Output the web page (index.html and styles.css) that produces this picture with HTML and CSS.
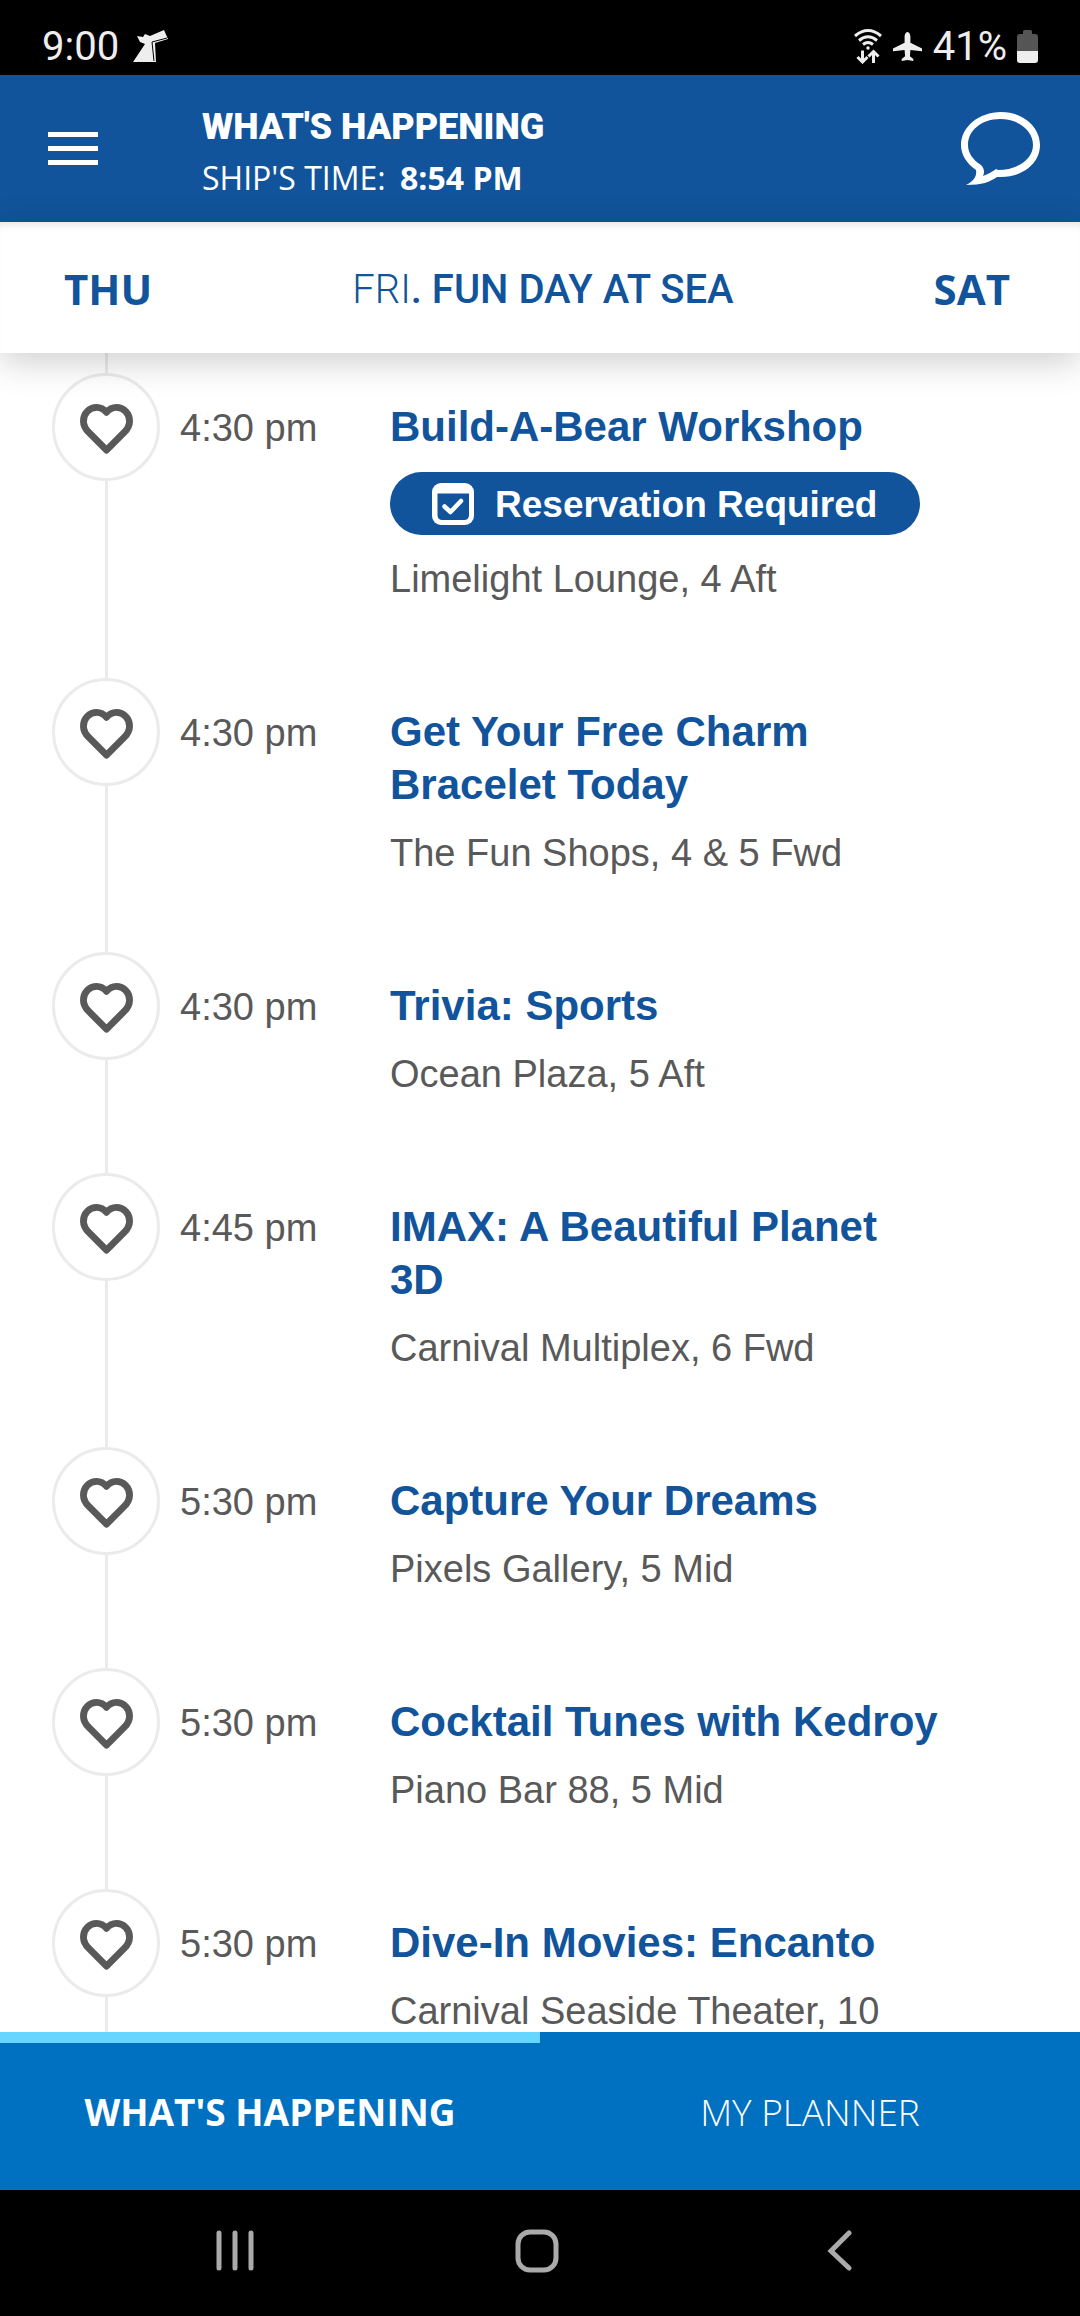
FILE: index.html
```html
<!DOCTYPE html>
<html lang="en">
<head>
<meta charset="UTF-8" />
<meta name="viewport" content="width=device-width, initial-scale=1" />
<title>What's Happening</title>
<link rel="stylesheet" href="styles.css">
</head>
<body>

<svg class="sprite" aria-hidden="true">
  <symbol id="heart" viewBox="0 0 54 51">
    <path d="M27 8.500C24 5 20.500 3.500 17 3.500C9.500 3.500 3.500 9.500 3.500 17.500C3.500 22 5.500 25.500 9 29L27 47L45 29C48.500 25.500 50.500 22 50.500 17.500C50.500 9.500 44.500 3.500 37 3.500C33.500 3.500 30 5 27 8.500Z" fill="none" stroke="currentColor" stroke-width="7" stroke-linejoin="round"/>
  </symbol>
</svg>

<div class="app">
  <div class="status-bar">
    <span class="clock">9:00</span>
    <svg class="funnel" width="35" height="32" viewBox="0 0 35 32">
      <path d="M4 6L10 7L12 4L17 6L31 0L35 9L22 13L23 32H0L12 14L7 12Z" fill="currentColor"/>
      <path d="M34 8L19 12L21 31" fill="none" stroke="#000" stroke-width="1"/>
    </svg>
    <div class="status-right">
      <svg width="28" height="36" viewBox="0 0 28 36" fill="none" stroke="currentColor" stroke-width="3">
        <path d="M1 8Q14-3 27 8M5 12.500Q14 5 23 12.500M9 16.500Q14 12.500 19 16.500"/>
        <circle cx="14" cy="20" r="1.700" fill="currentColor" stroke="none"/>
        <path d="M8.500 22.500V33M3.500 29L8.500 34L13.500 29M19.500 35V24M14.500 28.500L19.500 23.500L24.500 28.500"/>
      </svg>
      <svg width="31" height="31" viewBox="0 0 32 32" fill="currentColor">
        <path d="M16 1C18 1 19 4 19 6V12L31 18V21L19 19.500L18.500 26L22 29V31L16 30L10 31V29L13.500 26L13 19.500L1 21V18L13 12V6C13 4 14 1 16 1Z"/>
      </svg>
      <span class="percent">41%</span>
      <svg width="21" height="33" viewBox="0 0 21 33">
        <path d="M6 1.500Q6 0 7.500 0H13.500Q15 0 15 1.500V4H18Q21 4 21 7V21H0V7Q0 4 3 4H6Z" fill="#555"/>
        <path d="M0 21H21V30Q21 33 18 33H3Q0 33 0 30Z" fill="currentColor"/>
      </svg>
    </div>
  </div>

  <header class="header">
    <button class="icon-btn" aria-label="Menu">
      <svg width="50" height="34" viewBox="0 0 50 34" fill="currentColor">
        <path d="M0 0H50V5H0ZM0 14H50V19H0ZM0 28H50V33H0Z"/>
      </svg>
    </button>
    <div class="heading">
      <h1>WHAT'S HAPPENING</h1>
      <p>SHIP'S TIME: <strong>8:54 PM</strong></p>
    </div>
    <button class="icon-btn" aria-label="Chat">
      <svg width="79" height="73" viewBox="0 0 79 73" fill="currentColor" fill-rule="evenodd">
        <path d="M40 0C62 0 79 15 79 33C79 51 62 65 40 65H36C29 70 21 73 5 73C13 69 16 64 15 58C6 52 0 43 0 33C0 15 18 0 40 0ZM39 7C21 7 7 18 7 33C7 41 12 48 20 53C23 56 24 60 22 64C28 62 32 59 35 57L37 58C57 58 72 47 72 33C72 18 57 7 39 7Z"/>
      </svg>
    </button>
  </header>

  <nav class="days">
    <a href="#thu">THU</a>
    <span class="today"><span class="light">FRI</span>. FUN DAY AT SEA</span>
    <a href="#sat">SAT</a>
  </nav>

  <main class="schedule">
    <article class="event">
      <button class="fav" aria-label="Add to planner"><svg width="53" height="50"><use href="#heart"/></svg></button>
      <time>4:30 pm</time>
      <div class="info">
        <h2>Build-A-Bear Workshop</h2>
        <div class="badge">
          <svg width="42" height="42" viewBox="0 0 42 42">
            <rect width="42" height="42" rx="9" fill="#fff"/>
            <path d="M5.500 10.500H37V32Q37 37 32 37H10.500Q5.500 37 5.500 32Z" fill="#11549b"/>
            <path d="M12.500 23.500L18.500 29L29 18" fill="none" stroke="#fff" stroke-width="4.500" stroke-linecap="round" stroke-linejoin="round"/>
          </svg>
          <span>Reservation Required</span>
        </div>
        <p>Limelight Lounge, 4 Aft</p>
      </div>
    </article>

    <article class="event">
      <button class="fav" aria-label="Add to planner"><svg width="53" height="50"><use href="#heart"/></svg></button>
      <time>4:30 pm</time>
      <div class="info">
        <h2>Get Your Free Charm<br>Bracelet Today</h2>
        <p>The Fun Shops, 4 &amp; 5 Fwd</p>
      </div>
    </article>

    <article class="event">
      <button class="fav" aria-label="Add to planner"><svg width="53" height="50"><use href="#heart"/></svg></button>
      <time>4:30 pm</time>
      <div class="info">
        <h2>Trivia: Sports</h2>
        <p>Ocean Plaza, 5 Aft</p>
      </div>
    </article>

    <article class="event">
      <button class="fav" aria-label="Add to planner"><svg width="53" height="50"><use href="#heart"/></svg></button>
      <time>4:45 pm</time>
      <div class="info">
        <h2>IMAX: A Beautiful Planet<br>3D</h2>
        <p>Carnival Multiplex, 6 Fwd</p>
      </div>
    </article>

    <article class="event">
      <button class="fav" aria-label="Add to planner"><svg width="53" height="50"><use href="#heart"/></svg></button>
      <time>5:30 pm</time>
      <div class="info">
        <h2>Capture Your Dreams</h2>
        <p>Pixels Gallery, 5 Mid</p>
      </div>
    </article>

    <article class="event">
      <button class="fav" aria-label="Add to planner"><svg width="53" height="50"><use href="#heart"/></svg></button>
      <time>5:30 pm</time>
      <div class="info">
        <h2>Cocktail Tunes with Kedroy</h2>
        <p>Piano Bar 88, 5 Mid</p>
      </div>
    </article>

    <article class="event">
      <button class="fav" aria-label="Add to planner"><svg width="53" height="50"><use href="#heart"/></svg></button>
      <time>5:30 pm</time>
      <div class="info">
        <h2>Dive-In Movies: Encanto</h2>
        <p>Carnival Seaside Theater, 10</p>
      </div>
    </article>
  </main>

  <nav class="tabs">
    <a class="active" href="#happening">WHAT'S HAPPENING</a>
    <a href="#planner">MY PLANNER</a>
  </nav>

  <div class="system-nav">
    <button aria-label="Recents">
      <svg width="38" height="44" viewBox="0 0 38 44" fill="none" stroke="currentColor" stroke-width="5" stroke-linecap="round">
        <path d="M3 4V39M19 4V39M35 4V39"/>
      </svg>
    </button>
    <button aria-label="Home">
      <svg width="44" height="44" viewBox="0 0 44 44" fill="none" stroke="currentColor" stroke-width="5">
        <rect x="3" y="3" width="38" height="38" rx="12"/>
      </svg>
    </button>
    <button aria-label="Back">
      <svg width="26" height="44" viewBox="0 0 26 44" fill="none" stroke="currentColor" stroke-width="5" stroke-linecap="round">
        <path d="M23 4L5 22L23 39"/>
      </svg>
    </button>
  </div>
</div>

</body>
</html>
```
FILE: styles.css
```css
* { box-sizing: border-box; margin: 0; padding: 0; }
body {
  background: #fff;
  color: #595959;
  font-family: "Liberation Sans", Arial, sans-serif;
}
a { color: inherit; text-decoration: none; }
button {
  background: none;
  border: none;
  color: inherit;
  cursor: pointer;
}
svg { display: block; }
.sprite { display: none; }
.app {
  height: 100vh;
  display: flex;
  flex-direction: column;
}

/* status bar */
.status-bar {
  flex: none;
  display: flex;
  align-items: center;
  gap: 14px;
  padding: 17px 42px 0;
  height: 75px;
  background: #000;
  color: #eee;
  font-family: Roboto, sans-serif;
  font-size: 40px;
}
.status-right {
  margin-left: auto;
  display: flex;
  align-items: center;
  gap: 10px;
}

/* header */
.header {
  flex: none;
  display: flex;
  align-items: center;
  height: 147px;
  padding: 0 40px 0 48px;
  background: #11549b;
  color: #fff;
}
.heading {
  flex: 1;
  padding: 4px 0 0 104px;
}
.heading h1 {
  font-family: Roboto, sans-serif;
  font-size: 36px;
  font-weight: 900;
  line-height: 54px;
}
.heading p {
  font-family: "Open Sans", sans-serif;
  font-size: 32px;
  line-height: 48px;
}
.heading strong { margin-left: 6px; }

/* day switcher */
.days {
  flex: none;
  position: relative;
  z-index: 1;
  display: flex;
  justify-content: space-between;
  align-items: center;
  height: 131px;
  padding: 2px 70px 0 64px;
  background: #fff;
  color: #11549b;
  font-family: "Open Sans", sans-serif;
  font-size: 42px;
  font-weight: 700;
  box-shadow: 0 8px 34px rgba(0,0,0,0.2), inset 0 8px 10px -6px rgba(0,0,0,0.12);
}
.today {
  padding-top: 2px;
  font-family: Roboto, sans-serif;
  font-size: 40px;
  font-weight: 500;
}
.light { font-weight: 300; }

/* schedule */
.schedule {
  flex: 1;
  min-height: 0;
  overflow: hidden;
  padding-top: 20px;
  background: linear-gradient(#ebebeb, #ebebeb) 105px 0 / 3px 100% no-repeat;
}
.event {
  display: grid;
  grid-template-columns: 108px 190px 1fr;
  column-gap: 20px;
  padding: 0 100px 0 52px;
}
.fav {
  width: 108px;
  height: 108px;
  display: flex;
  justify-content: center;
  align-items: center;
  padding-top: 4px;
  background: #fff;
  border: 3px solid #ebebeb;
  border-radius: 50%;
  color: #595959;
}
.event time {
  padding-top: 27px;
  font-size: 38px;
  line-height: 56px;
}
.info {
  padding: 27px 0 71px;
}
.info h2 {
  color: #11549b;
  font-size: 42px;
  line-height: 53px;
}
.info p {
  margin-top: 14px;
  font-size: 38px;
  line-height: 56px;
}
.badge {
  display: flex;
  align-items: center;
  gap: 21px;
  width: fit-content;
  height: 63px;
  margin-top: 19px;
  padding: 0 43px 0 42px;
  border-radius: 32px;
  background: #11549b;
  color: #fff;
  font-size: 37px;
  font-weight: 700;
}
.badge span { padding-top: 3px; }
.info .badge + p { margin-top: 16px; }

/* tabs */
.tabs {
  flex: none;
  display: flex;
  height: 158px;
  background: #0070c0;
  color: #fff;
  font-family: "Open Sans", sans-serif;
  font-size: 37px;
  font-weight: 300;
}
.tabs a {
  flex: 1;
  display: flex;
  justify-content: center;
  align-items: center;
  border-top: 11px solid transparent;
  padding-bottom: 11px;
}
.tabs .active {
  font-weight: 700;
  border-color: #66d5ff;
}

/* android navigation */
.system-nav {
  flex: none;
  display: flex;
  height: 126px;
  padding: 0 90px 4px 84px;
  background: #000;
  color: #aaa;
}
.system-nav button {
  flex: 1;
  display: flex;
  justify-content: center;
  align-items: center;
}
```
